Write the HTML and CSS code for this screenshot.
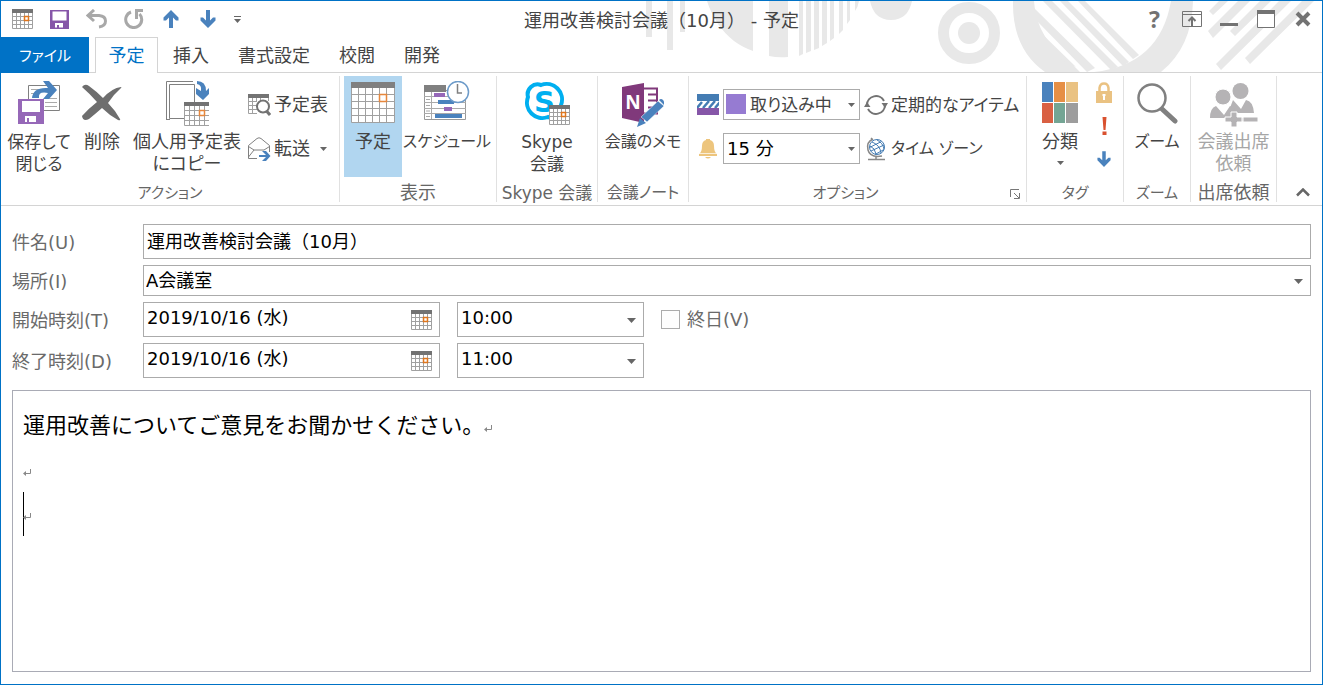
FILE: index.html
```html
<!DOCTYPE html>
<html lang="ja">
<head>
<meta charset="utf-8">
<meta name="viewport" content="width=device-width, initial-scale=1">
<title>運用改善検討会議（10月） - 予定</title>
<link rel="stylesheet" href="styles.css">
</head>
<body>
<svg class="defs" aria-hidden="true">
  <symbol id="cal" viewBox="0 0 21 20">
    <path d="M0 0h21v20H0z" fill="#fff"/>
    <path d="M.5 4v15.500h20V4M4.500 4v15M8.500 4v15M12.500 4v15M16.500 4v15M0 7.500h21M0 11.500h21M0 15.500h21" fill="none" stroke="#a0a0a0"/>
    <path d="M0 0h21v4H0z" fill="#737373"/>
    <path d="M12.500 7.500h4v4h-4z" fill="#fff" stroke="#e0761c" stroke-width="1.500"/>
  </symbol>
  <symbol id="caret" viewBox="0 0 9 5"><path d="M0 0h9L4.500 5z" fill="#666"/></symbol>
  <symbol id="down" viewBox="0 0 16 18"><path d="M6 0h4v10.500L13 7.500H15.500V10.500L8 18 .5 10.500V7.500H3L6 10.500z" fill="#4a82bd"/></symbol>
  <symbol id="ret" viewBox="0 0 8 8"><path d="M7.500 0v4.500H1" fill="none" stroke="#888"/><path d="M0 4.500L3 2v5z" fill="#888"/></symbol>
</svg>
<div class="window">
  <svg class="deco" viewBox="0 0 682 71" aria-hidden="true">
    <g fill="#e8e8e8">
      <path d="M6 0h6v36H6zM27 0h6v49h-6zM40 0h5v31h-5z"/>
      <path d="M67 0h46v50Q102 46 94 40Q75 25 67 0zM129 0h19v56q-10 1-19-1zM159 0h4v53l-4 2zM166 0h5v50l-5 2zM174 0h5v47l-5 2zM182 0h5v42l-5 3zM190 0h4v37l-4 3zM199 0h4v29l-4 4zM207 0h3v19l-3 4zM215 0h4q-1 6-4 10z"/>
      <path d="M230 0h42q-4 19-21 19T230 0z"/>
      <circle cx="329" cy="32" r="11"/>
    </g>
    <circle cx="329" cy="32" r="25.500" fill="none" stroke="#e8e8e8" stroke-width="11"/>
    <g fill="#e8e8e8">
      <path d="M373 0h21q2 38 39 64l7 7h-35Q372 48 373 0z"/>
      <path d="M531 0h22q-1 46-32 71h-67q66-7 77-71z"/>
      <path d="M394 7l61 60-8 4L395 18zM399 30l37 36Q408 55 399 30zM403 0h9l66 66-7 3zM420 0h8l61 61-6 4zM438 0h7l54 54-6 4z"/>
      <path d="M569 10l10-10h9l-15 14zM568 30l30-30h12l-37 37zM590 30l30-30h11l-36 35zM576 63l63-63h12l-70 69zM605 57l57-57h12l-64 63z"/>
    </g>
  </svg>

  <header class="titlebar">
    <nav class="quick" aria-label="クイック アクセス">
      <button aria-label="予定表"><svg width="21" height="20"><use href="#cal"/></svg></button>
      <button aria-label="保存"><svg width="19" height="19" viewBox="0 0 19 19"><path d="M0 0h19v19H0z" fill="#8656a8"/><path d="M2.500 1.500h14v9h-14zM5 13h8v4.500H9V15H7v2.500H5z" fill="#fff"/></svg></button>
      <button aria-label="元に戻す"><svg width="22" height="20" viewBox="0 0 22 20"><path d="M8 1L2 6.500 8 12M2.500 6.500H13q6.500.5 6.500 5.500T13 18" fill="none" stroke="#a8a8a8" stroke-width="3"/></svg></button>
      <button aria-label="やり直し"><svg width="20" height="20" viewBox="0 0 20 20"><path d="M7 3A8 8 0 1 0 15.500 5" fill="none" stroke="#a8a8a8" stroke-width="3"/><path d="M11 0h8v3h-5v7h-3z" fill="#a8a8a8"/></svg></button>
      <button aria-label="前のアイテム"><svg class="up" width="16" height="18"><use href="#down"/></svg></button>
      <button aria-label="次のアイテム"><svg width="16" height="18"><use href="#down"/></svg></button>
      <button class="narrow" aria-label="カスタマイズ"><svg width="7" height="7" viewBox="0 0 7 7"><path d="M0 0h7v1H0zM0 3h7L3.500 7z" fill="#666"/></svg></button>
    </nav>
    <h1>運用改善検討会議（10月） - 予定</h1>
    <div class="controls">
      <button class="help" aria-label="ヘルプ">?</button>
      <button aria-label="リボンの表示オプション"><svg width="20" height="16" viewBox="0 0 20 16"><path d="M.5.5h19v15H.5zM0 3.500h20" fill="none" stroke="#737373"/><path d="M10 15V6M6.500 10L10 6.500l3.500 3.500" fill="none" stroke="#737373" stroke-width="2"/></svg></button>
      <button aria-label="最小化"><svg width="18" height="16" viewBox="0 0 18 16"><path d="M0 12h18v3H0z" fill="#737373"/></svg></button>
      <button aria-label="最大化"><svg width="18" height="18" viewBox="0 0 18 18"><path d="M.5.5h17v17H.5z" fill="#fff" stroke="#737373"/><path d="M0 0h18v4H0z" fill="#737373"/></svg></button>
      <button aria-label="閉じる"><svg width="16" height="16" viewBox="0 0 16 16"><path d="M2 2l12 12M14 2L2 14" stroke="#737373" stroke-width="4"/></svg></button>
    </div>
  </header>

  <nav class="tabs">
    <button class="file">ファイル</button>
    <button class="active">予定</button>
    <button>挿入</button>
    <button>書式設定</button>
    <button>校閲</button>
    <button>開発</button>
  </nav>

  <section class="ribbon" aria-label="リボン">
    <section class="group actions">
      <div class="tools">
        <button class="big save"><svg width="44" height="46" viewBox="0 0 44 46">
          <path d="M11.500 4.500h31v25h-31z" fill="#fff" stroke="#808080"/><path d="M14 8.500h10M14 12.500h8M28 17.500h12M28 21.500h12M28 25.500h12" stroke="#aaa"/>
          <path d="M1 18h26v25H1z" fill="#9668b8"/><path d="M5 20h18v11H5zM8 35h11v6h-7v-4h-2v4H8z" fill="#fff"/>
          <path d="M15 17Q16 6 31 7L26 0h6l8 9-8 9h-6l5-6q-10-2-9 5z" fill="#4a82bd"/></svg>
          <span>保存して<br>閉じる</span></button>
        <button class="big delete"><svg width="42" height="46" viewBox="0 0 42 46"><path d="M1 6Q4 2 8 5Q15 10 22 17Q31 7 40 6q1 0 0 1Q33 13 27 22Q34 29 39 38q1 2-2 1Q28 34 21 27Q13 34 8 38 2 41 1 35 7 28 16 21 8 12 1 6z" fill="#6e6e6e"/></svg>
          <span>削除</span></button>
        <button class="big copy"><svg width="44" height="46" viewBox="1 0 44 46">
          <path d="M2.500 38V.5H29" fill="none" stroke="#808080"/><path d="M2 38.500h4" stroke="#808080"/><path d="M5.500 3.500h25v34h-25z" fill="#fff" stroke="#808080"/>
          <path d="M33 0Q42 0 42 10l3-3v6l-6 6-7-6V7l5 3Q38 4 33 3z" fill="#4a82bd"/>
          <svg x="20" y="21" width="26" height="24" viewBox="0 0 26 24"><path d="M0 0h26v24H0z" fill="#fff"/><path d="M.5 4v19.500h25V4M5.500 4v19M10.500 4v19M15.500 4v19M20.500 4v19M0 8.500h26M0 13.500h26M0 18.500h26" fill="none" stroke="#a0a0a0"/><path d="M0 0h26v4H0z" fill="#737373"/><path d="M15.500 8.500h5v5h-5z" fill="#fff" stroke="#e6873c" stroke-width="1.500"/></svg></svg>
          <span>個人用予定表<br>にコピー</span></button>
        <div class="smalls">
          <button class="small"><svg width="23" height="22" viewBox="0 0 23 22"><path d="M.5 4v15.500H9M4.500 4v15M8.500 4v4M0 7.500h9M0 11.500h9M0 15.500h9M12.500 4v3M20.500 4v3" fill="none" stroke="#a0a0a0"/><path d="M0 0h21v4H0z" fill="#737373"/><circle cx="15" cy="12.500" r="6" fill="#fff" stroke="#737373" stroke-width="2"/><path d="M18.500 17l3.500 4" stroke="#737373" stroke-width="3"/></svg>予定表</button>
          <button class="small"><svg width="23" height="24" viewBox="0 0 23 24"><path d="M9 21.500H.5V8.500L9 1.500q2-1.500 4 0l8.500 7V15M.5 9.500L6 13h10l5.500-3.500M.5 20L6 13" fill="none" stroke="#808080"/><path d="M11 18h7l-4-4h4l4.500 5-4.500 5h-4l4-4h-7z" fill="#4a82bd"/></svg>転送<svg class="more" width="7" height="4"><use href="#caret"/></svg></button>
        </div>
      </div>
      <h2>アクション</h2>
    </section>

    <section class="group view">
      <div class="tools">
        <button class="big selected" aria-pressed="true"><svg width="44" height="46" viewBox="0 0 44 46"><path d="M.5 1h43v40H.5z" fill="#fff"/><path d="M.5 1v40.500h43V1M7.500 7v34M14.500 7v34M21.500 7v34M28.500 7v34M35.500 7v34M0 13.500h44M0 20.500h44M0 27.500h44M0 34.500h44" fill="none" stroke="#a0a0a0"/><path d="M0 1h44v6H0z" fill="#808080"/><path d="M28.500 13.500h7v7h-7z" fill="#fff" stroke="#e6873c" stroke-width="1.500"/></svg>
          <span>予定</span></button>
        <button class="big schedule"><svg width="46" height="46" viewBox="0 0 46 46"><path d="M.5 9.500h41v29H.5z" fill="#fff" stroke="#999"/><path d="M7.500 10v28M0 15.500h42M0 21.500h42M0 27.500h42M0 32.500h42M2 18.500h4M2 24.500h4M2 30h4M2 35.500h4" stroke="#aaa"/><path d="M0 4h22v7H0z" fill="#808080"/><path d="M10 12h11v4H10zM20 26h8v4h-8z" fill="#9668b8"/><path d="M14 19h16v4H14zM11 33h27v4H11z" fill="#4a82bd"/><circle cx="34" cy="9.500" r="10.500" fill="#fff"/><circle cx="34" cy="11" r="10.500" fill="#fff" stroke="#6d9bc9" stroke-width="1.500"/><path d="M33.500 3v9H38" fill="none" stroke="#808080" stroke-width="1.500"/></svg>
          <span>スケジュール</span></button>
      </div>
      <h2>表示</h2>
    </section>

    <section class="group skype">
      <div class="tools">
        <button class="big"><svg width="46" height="46" viewBox="0 0 46 46"><path d="M4 16A10 10 0 0 1 17 4A15.500 15.500 0 0 1 37 24A10 10 0 0 1 24 36A15.500 15.500 0 0 1 4 16z" fill="#fff" stroke="#00aff0" stroke-width="4"/><text x="20.500" y="31" class="skype-s">S</text>
          <svg x="25" y="24" width="21" height="20"><use href="#cal"/></svg></svg>
          <span>Skype<br>会議</span></button>
      </div>
      <h2>Skype 会議</h2>
    </section>

    <section class="group notes">
      <div class="tools">
        <button class="big"><svg width="42" height="46" viewBox="1 0 42 46"><path d="M22 7.500h14v25H22M27 13.500h9M27 19.500h9M27 26.500h9" fill="#fff" stroke="#80397b" stroke-width="2"/><path d="M1 6l22-4v40L1 37z" fill="#80397b"/><text x="12" y="28" class="note-n">N</text><path d="M37 20l6 5-17 16-6-5z" fill="#4a82bd" stroke="#fff" stroke-width=".5"/><path d="M19 37l6 5-9 4z" fill="#4a82bd"/><path d="M38 19q2-2 4 0t1 5z" fill="#4a82bd"/></svg>
          <span>会議のメモ</span></button>
      </div>
      <h2>会議ノート</h2>
    </section>

    <section class="group options">
      <div class="tools">
        <label for="busy" aria-label="公開方法"><svg width="22" height="21" viewBox="0 0 22 21"><path d="M0 0h22v7H0z" fill="#447cb3"/><path d="M0 14l5-6M6 14l6-7M12 14l6-7M18 14l5-6" stroke="#447cb3" stroke-width="2.500"/><path d="M0 14h22v7H0z" fill="#8656a8"/></svg></label>
        <div class="combo busy"><i class="swatch"></i><select id="busy"><option>取り込み中</option></select><svg class="arrow" width="7" height="4"><use href="#caret"/></svg></div>
        <button class="small"><svg width="24" height="22" viewBox="0 0 24 22"><path d="M3 11A9 9 0 0 1 20 7M21 11A9 9 0 0 1 4 15" fill="none" stroke="#737373" stroke-width="2"/><path d="M0 13h6.500L3 8zM17.500 9H24l-3 5z" fill="#737373"/></svg>定期的なアイテム</button>
        <label for="remind" aria-label="アラーム"><svg width="18" height="20" viewBox="0 0 18 20"><path d="M7 0h4v1q4 1 4 6 0 6 3 8v2H0v-2q3-2 3-8 0-5 4-6zM6 18h6q-3 3-6 0z" fill="#edc57d"/><path d="M0 14.500h18" stroke="#fff" stroke-width=".7"/></svg></label>
        <div class="combo"><select id="remind"><option>15 分</option></select><svg class="arrow" width="7" height="4"><use href="#caret"/></svg></div>
        <button class="small zone"><svg width="24" height="24" viewBox="0 0 24 24"><path d="M9 2Q2 5 4 13t14 6M7 1l2 2M12 20v3M4 22.500h17" fill="none" stroke="#888" stroke-width="1.500"/><circle cx="13" cy="10" r="7.500" fill="#fff" stroke="#447cb3"/><path d="M5.500 10.500l12-6M7 14l13-6M11 17.500l9-5M8 5q8 3 9 11M13 3q6 3 7 9M6 9q5 2 6 8" fill="none" stroke="#447cb3"/></svg>タイム ゾーン</button>
      </div>
      <h2>オプション</h2>
      <button class="launcher" aria-label="オプションの詳細"><svg width="10" height="10" viewBox="0 0 10 10"><path d="M.5 8V.5H9M4 4l5 5M9.500 4v5.500H4" fill="none" stroke="#777"/></svg></button>
    </section>

    <section class="group tags">
      <div class="tools">
        <button class="big category"><svg width="36" height="46" viewBox="0 0 36 46"><path d="M0 1h11v20H0z" fill="#4a82bd"/><path d="M12 1h11v20H12z" fill="#e68f45"/><path d="M24 1h12v20H24z" fill="#eac282"/><path d="M0 22h11v20H0z" fill="#d96043"/><path d="M12 22h11v20H12z" fill="#74a594"/><path d="M24 22h12v20H24z" fill="#9d9d9d"/></svg>
          <span>分類</span><svg class="below" width="7" height="4"><use href="#caret"/></svg></button>
        <div class="marks">
          <button aria-label="非公開"><svg width="16" height="22" viewBox="0 0 16 22"><path d="M3.500 10V6Q4 1.500 8 1.500T12.500 6v4" fill="none" stroke="#eac282" stroke-width="2.500"/><path d="M0 9h16v12H0z" fill="#eac282"/><path d="M8 12v6M6.500 13h3" stroke="#fff" stroke-width="2"/></svg></button>
          <button aria-label="重要度 - 高"><svg width="5" height="18" viewBox="0 0 5 18"><path d="M.5 0h4L3.500 13h-2zM.5 14.500h4V18h-4z" fill="#d9512f"/></svg></button>
          <button aria-label="重要度 - 低"><svg width="14" height="16"><use href="#down"/></svg></button>
        </div>
      </div>
      <h2>タグ</h2>
    </section>

    <section class="group zoom">
      <div class="tools">
        <button class="big"><svg width="42" height="46" viewBox="0 0 42 46"><path d="M26 28l13 12" stroke="#808080" stroke-width="5" stroke-linecap="round"/><circle cx="16" cy="17" r="13.500" fill="#fff" stroke="#808080" stroke-width="2.500"/></svg>
          <span>ズーム</span></button>
      </div>
      <h2>ズーム</h2>
    </section>

    <section class="group invite">
      <div class="tools">
        <button class="big" disabled><svg width="48" height="46" viewBox="0 0 48 46"><g fill="#b5b3b5"><circle cx="30.500" cy="10" r="8"/><path d="M23 19l8 9 5-9q7 1 8 13H18z"/><circle cx="13" cy="16" r="8" stroke="#fff"/><path d="M6 25l8 9 6-9q8 2 7 12H0Q0 27 6 25z"/><path d="M21 31h6v5h6v5h-6v5h-6v-5h-6v-5h6zM32 36h16v5H32z" stroke="#fff"/></g></svg>
          <span>会議出席<br>依頼</span></button>
      </div>
      <h2>出席依頼</h2>
    </section>

    <button class="collapse" aria-label="リボンを折りたたむ"><svg width="14" height="9" viewBox="0 0 14 9"><path d="M1 7.500l6-6 6 6" fill="none" stroke="#666" stroke-width="2.500"/></svg></button>
  </section>

  <main>
    <form class="details">
      <label for="subject">件名(U)</label>
      <input id="subject" class="field" type="text" value="運用改善検討会議（10月）">
      <label for="place">場所(I)</label>
      <div class="combo place"><select id="place"><option>A会議室</option></select><svg class="arrow" width="9" height="5"><use href="#caret"/></svg></div>
      <label for="start">開始時刻(T)</label>
      <div class="when">
        <div class="date"><input id="start" type="text" value="2019/10/16 (水)"><button type="button" aria-label="開始日を選択"><svg width="21" height="20"><use href="#cal"/></svg></button></div>
        <div class="combo time"><select aria-label="開始時刻"><option>10:00</option></select><svg class="arrow" width="9" height="5"><use href="#caret"/></svg></div>
        <label class="allday"><input type="checkbox">終日(V)</label>
      </div>
      <label for="end">終了時刻(D)</label>
      <div class="when">
        <div class="date"><input id="end" type="text" value="2019/10/16 (水)"><button type="button" aria-label="終了日を選択"><svg width="21" height="20"><use href="#cal"/></svg></button></div>
        <div class="combo time"><select aria-label="終了時刻"><option>11:00</option></select><svg class="arrow" width="9" height="5"><use href="#caret"/></svg></div>
      </div>
    </form>
    <div class="message" contenteditable="true" role="textbox" aria-multiline="true" aria-label="本文">
      <p>運用改善についてご意見をお聞かせください。<svg width="8" height="8"><use href="#ret"/></svg></p>
      <p><svg width="8" height="8"><use href="#ret"/></svg></p>
      <p class="cursor"><svg width="8" height="8"><use href="#ret"/></svg></p>
    </div>
  </main>
</div>
</body>
</html>
```

FILE: styles.css
```css
* { box-sizing: border-box; }
body {
  margin: 0;
  background: #fff;
  color: #444;
  font: 18px/22px "DejaVu Sans", "Noto Sans CJK JP", sans-serif;
}
button, input, select { font: inherit; color: inherit; margin: 0; padding: 0; border: 0; background: none; border-radius: 0; outline: 0; }
button { display: flex; align-items: center; justify-content: center; }
select { appearance: none; width: 100%; height: 100%; }
svg { display: block; flex: none; }
h1, h2, p { margin: 0; font-size: inherit; font-weight: 400; }
.defs { position: absolute; width: 0; height: 0; }

.window {
  position: relative;
  display: flex;
  flex-direction: column;
  min-height: 100vh;
  border: 1px solid #0072c6;
}
.deco { position: absolute; top: 0; right: 0; width: 682px; height: 71px; }

.titlebar { position: relative; display: grid; grid-template-columns: 1fr auto 1fr; height: 36px; align-items: center; }
.titlebar h1 { padding-top: 3px; }
.quick, .controls { display: flex; }
.quick { padding-left: 3px; }
.quick button, .controls button { width: 37px; height: 36px; }
.quick .narrow { width: 22px; }
.controls { justify-content: flex-end; padding-right: 1px; }
.controls .help { font-size: 23px; font-weight: 700; font-family: "Open Sans", sans-serif; color: #737373; }
.up { transform: rotate(180deg); }

.tabs { position: relative; display: flex; height: 36px; border-bottom: 1px solid #d4d4d4; }
.tabs button { height: 36px; padding: 2px 14px 0; margin-left: 1px; }
.tabs .file { width: 88px; margin: 0 5px 0 0; background: #0072c6; color: #fff; font-size: 15px; font-feature-settings: "palt"; }
.tabs .active { width: 63px; padding: 0; border: 1px solid #d4d4d4; border-bottom: 0; background: #fff; color: #0072c6; }

.ribbon { display: flex; padding-top: 3px; height: 133px; border-bottom: 1px solid #d4d4d4; font-feature-settings: "palt"; }
.group { position: relative; display: flex; flex-direction: column; border-right: 1px solid #e1e1e1; height: 126px; }
.group h2 { line-height: 18px; padding-top: 7px; text-align: center; color: #666; white-space: nowrap; font-size: 15px; }
.tools { display: flex; flex: none; height: 101px; justify-content: center; }
.big { flex-direction: column; justify-content: flex-start; padding-top: 5px; white-space: nowrap; }
.big span { margin-top: 4px; }
.big:disabled { color: #a6a6a6; }
.below { margin-top: 8px; }
.small { gap: 3px; height: 31px; justify-content: flex-start; white-space: nowrap; }
.more { margin-left: 7px; }

.actions { width: 339px; }
.actions .tools { justify-content: flex-start; }
.save { width: 76px; font-size: 17px; }
.delete { width: 50px; }
.copy { width: 120px; }
.smalls { display: flex; flex-direction: column; gap: 13px; padding: 13px 0 0 1px; }
.view { width: 157px; }
.view .tools { justify-content: flex-start; padding-left: 4px; }
.view h2 { font-size: 18px; }
.selected { width: 58px; background: #b1d6f0; }
.schedule { width: 90px; font-size: 16px; }
.skype { width: 101px; }
.skype .big, .skype h2 { font-size: 17px; }
.skype-s { font: 700 29px "DejaVu Sans", sans-serif; fill: #00aff0; text-anchor: middle; }
.notes { width: 91px; }
.notes .big { font-size: 16px; }
.notes h2 { font-size: 16px; }
.note-n { font: 700 19px "Open Sans", sans-serif; fill: #fff; text-anchor: middle; }
.options { width: 338px; }
.options h2 { padding-right: 24px; }
.options .tools { display: grid; grid-template-columns: 22px 137px 1fr; grid-auto-rows: 31px; gap: 13px 4px; padding: 13px 4px 0 8px; align-items: center; }
.options label { justify-self: center; }
.options .small { font-size: 17px; }
.options .zone { font-size: 16px; }
.launcher { position: absolute; right: 6px; bottom: 3px; }
.tags { width: 97px; }
.category { width: 58px; }
.marks { display: flex; flex-direction: column; width: 30px; }
.marks button { height: 33px; }
.zoom { width: 67px; }
.zoom .big { font-size: 16px; }
.invite { width: 86px; }
.invite h2 { font-size: 18px; }
.collapse { margin: auto 12px 8px auto; }

.combo { position: relative; height: 31px; border: 1px solid #ababab; background: #fff; }
.combo select { padding: 0 18px 0 3px; }
.arrow { position: absolute; right: 4px; top: 50%; margin-top: -2px; pointer-events: none; }
.busy .arrow { z-index: 1; }
.combo.busy select { padding-left: 26px; font-feature-settings: "palt"; font-size: 17px; }
.swatch { position: absolute; left: 2px; top: 4px; width: 20px; height: 20px; background: #967bd2; }
.options #remind { color: #000; }

main { flex: 1; display: flex; flex-direction: column; gap: 12px; padding: 18px 11px 12px; }
.details { display: grid; grid-template-columns: 131px 1fr; gap: 6px 0; align-items: center; color: #000; }
.details label { color: #6a6a6a; }
.details > label { padding-top: 2px; }
.field, .date { height: 35px; border: 1px solid #ababab; }
.field { width: 100%; padding: 0 3px 4px; }
.place select { padding-left: 2px; }
.place .arrow, .time .arrow { right: 7px; }
.when { display: flex; align-items: center; }
.date { display: flex; width: 297px; padding: 0 7px 0 3px; }
.date input { flex: 1; min-width: 0; padding-bottom: 3px; }
.time { width: 187px; height: 35px; margin: 0 17px; }
.time select { padding-bottom: 3px; }
.allday { display: flex; align-items: center; gap: 7px; }
.allday input { appearance: none; width: 19px; height: 19px; border: 1px solid #ababab; background: #fdfdfd; }

.message { flex: 1; border: 1px solid #a9abb5; padding: 13px 10px; color: #000; font-size: 22px; line-height: 44px; outline: 0; }
.message p { height: 44px; }
.message svg { display: inline-block; vertical-align: 0; }
.cursor { border-left: 1px solid #000; }
.cursor svg { margin-left: -1px; }
```
